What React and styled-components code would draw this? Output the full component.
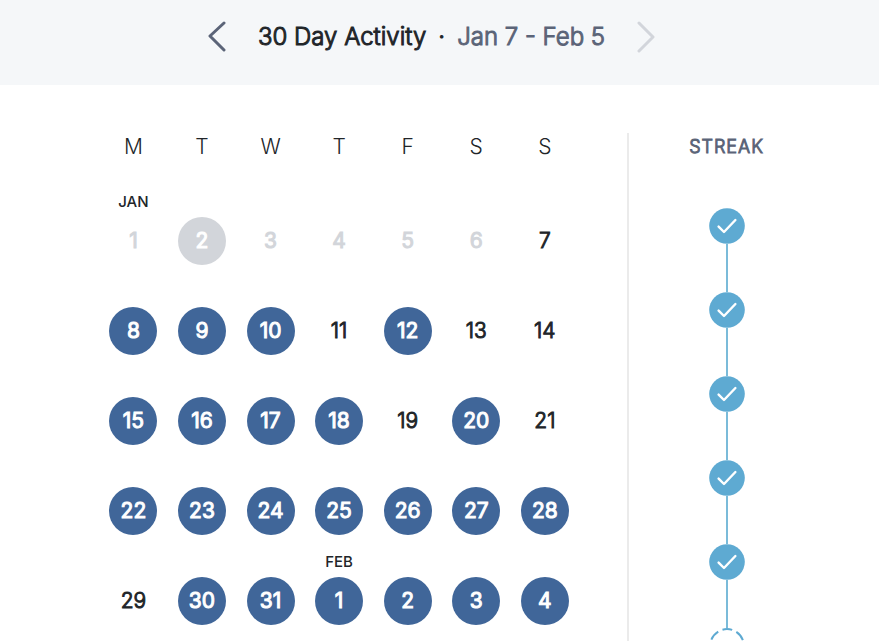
import React from 'react';
import styled, { createGlobalStyle } from 'styled-components';

const GlobalStyle = createGlobalStyle`
    * {
        box-sizing: border-box;
    }

    body {
        background-color: #ffffff;
        color: #212529;
        font-family: Inter, "Liberation Sans", sans-serif;
        margin: 0;
        overflow: hidden;
    }
`;

const Page = styled.div`
    display: flex;
    flex-direction: column;
    height: 100vh;
`;

const Header = styled.header`
    align-items: center;
    background-color: #f5f7f9;
    display: flex;
    flex-shrink: 0;
    gap: 32px;
    justify-content: center;
    padding: 20px 16px 32px 0;
`;

const NavButton = styled.button`
    background: none;
    border: none;
    color: #5b6478;
    cursor: pointer;
    display: flex;
    padding: 0;

    &:disabled {
        color: #d2d5db;
        cursor: default;
    }
`;

const Title = styled.h1`
    -webkit-text-stroke: 1px;
    display: flex;
    font-size: 24px;
    font-weight: 300;
    gap: 12px;
    line-height: 33px;
    margin: 0;
`;

const DateRange = styled.span`
    color: #5b6478;
`;

const Content = styled.main`
    display: flex;
    flex: 1;
    justify-content: center;
    min-height: 0;
    padding: 48px 16px 0 0;
`;

const Calendar = styled.table`
    align-self: flex-start;
    border-collapse: collapse;
    margin-right: 48px;
    table-layout: fixed;
    width: 480px;
`;

const Weekday = styled.th`
    font-size: 21px;
    font-weight: 300;
    height: 57px;
    line-height: 28px;
    padding: 0;
    vertical-align: top;
`;

const DayCell = styled.td`
    height: 90px;
    padding: 0;
    vertical-align: top;
`;

const Month = styled.div`
    font-size: 15px;
    font-weight: 500;
    height: 27px;
    line-height: 24px;
    text-align: center;
`;

const Day = styled.div`
    -webkit-text-stroke: 1px;
    background-color: ${({ $active, $muted }) =>
        $active ? ($muted ? '#d2d5da' : '#406699') : 'transparent'};
    border-radius: 50%;
    color: ${({ $active, $muted }) =>
        $active ? '#ffffff' : $muted ? '#d2d5da' : '#212529'};
    font-size: 21px;
    font-weight: ${({ $active, $muted }) => ($active || $muted ? 400 : 300)};
    height: 48px;
    line-height: 48px;
    margin: 0 auto;
    text-align: center;
    width: 48px;
`;

const Streak = styled.section`
    border-left: 2px solid #ebebeb;
    padding-left: 60px;
`;

const StreakTitle = styled.h2`
    -webkit-text-stroke: 1px;
    color: #5b6478;
    font-size: 18px;
    font-weight: 300;
    letter-spacing: 1px;
    line-height: 28px;
    margin: 0 0 47px;
`;

const StreakList = styled.ol`
    align-items: center;
    display: flex;
    flex-direction: column;
    list-style: none;
    margin: 0;
    padding: 0;
`;

const StreakItem = styled.li`
    align-items: center;
    display: flex;
    flex-direction: column;

    &:not(:last-child)::after {
        background-color: #7bbbd9;
        content: '';
        height: 48px;
        width: 2px;
    }
`;

const Icon = styled.svg`
    display: block;
    flex-shrink: 0;
`;

const weekdays = ['M', 'T', 'W', 'T', 'F', 'S', 'S'];

const activeDays = [
    2, 8, 9, 10, 12, 15, 16, 17, 18, 20, 22, 23, 24, 25, 26, 27, 28, 30, 31,
    32, 33, 34, 35
];

const weeks = [0, 1, 2, 3, 4].map(week =>
    weekdays.map((_, index) => {
        const day = week * 7 + index + 1;
        return {
            id: day,
            date: day > 31 ? day - 31 : day,
            month: { 1: 'JAN', 32: 'FEB' }[day],
            active: activeDays.includes(day),
            muted: day < 7
        };
    })
);

const streak = [true, true, true, true, true, false];

const Chevron = ({ points }) => (
    <Icon width="18" height="33" viewBox="0 0 18 33" aria-hidden="true">
        <polyline
            points={points}
            fill="none"
            stroke="currentColor"
            strokeWidth="3"
            strokeLinecap="round"
            strokeLinejoin="round"
        />
    </Icon>
);

const StreakIcon = ({ done }) => (
    <Icon
        width="36"
        height="36"
        viewBox="0 0 36 36"
        role="img"
        aria-label={done ? 'Complete' : 'Incomplete'}
    >
        {done ? (
            <>
                <circle cx="18" cy="18" r="17.8" fill="#5eaad2" />
                <path
                    d="M9.6 18.6L15 24L26.4 12"
                    fill="none"
                    stroke="#ffffff"
                    strokeWidth="2.4"
                    strokeLinecap="round"
                    strokeLinejoin="round"
                />
            </>
        ) : (
            <circle
                cx="18"
                cy="18"
                r="16.9"
                fill="none"
                stroke="#5eaad2"
                strokeWidth="2"
                strokeDasharray="10.6 4.57"
                strokeDashoffset="5.3"
                transform="rotate(-90 18 18)"
            />
        )}
    </Icon>
);

const ActivityCalendar = () => (
    <Calendar>
        <thead>
            <tr>
                {weekdays.map((name, index) => (
                    <Weekday key={index} scope="col">
                        {name}
                    </Weekday>
                ))}
            </tr>
        </thead>
        <tbody>
            {weeks.map(week => (
                <tr key={week[0].id}>
                    {week.map(({ id, date, month, active, muted }) => (
                        <DayCell key={id}>
                            <Month>{month}</Month>
                            <Day $active={active} $muted={muted}>
                                {date}
                            </Day>
                        </DayCell>
                    ))}
                </tr>
            ))}
        </tbody>
    </Calendar>
);

const App = () => (
    <>
        <GlobalStyle />
        <Page>
            <Header>
                <NavButton type="button" aria-label="Previous 30 days">
                    <Chevron points="16,3 2,16 16,30" />
                </NavButton>
                <Title>
                    <span>30 Day Activity</span>
                    <span>·</span>
                    <DateRange>Jan 7 - Feb 5</DateRange>
                </Title>
                <NavButton type="button" aria-label="Next 30 days" disabled>
                    <Chevron points="2,3 16,17 2,31" />
                </NavButton>
            </Header>
            <Content>
                <ActivityCalendar />
                <Streak>
                    <StreakTitle>STREAK</StreakTitle>
                    <StreakList>
                        {streak.map((done, index) => (
                            <StreakItem key={index}>
                                <StreakIcon done={done} />
                            </StreakItem>
                        ))}
                    </StreakList>
                </Streak>
            </Content>
        </Page>
    </>
);

export default App;
